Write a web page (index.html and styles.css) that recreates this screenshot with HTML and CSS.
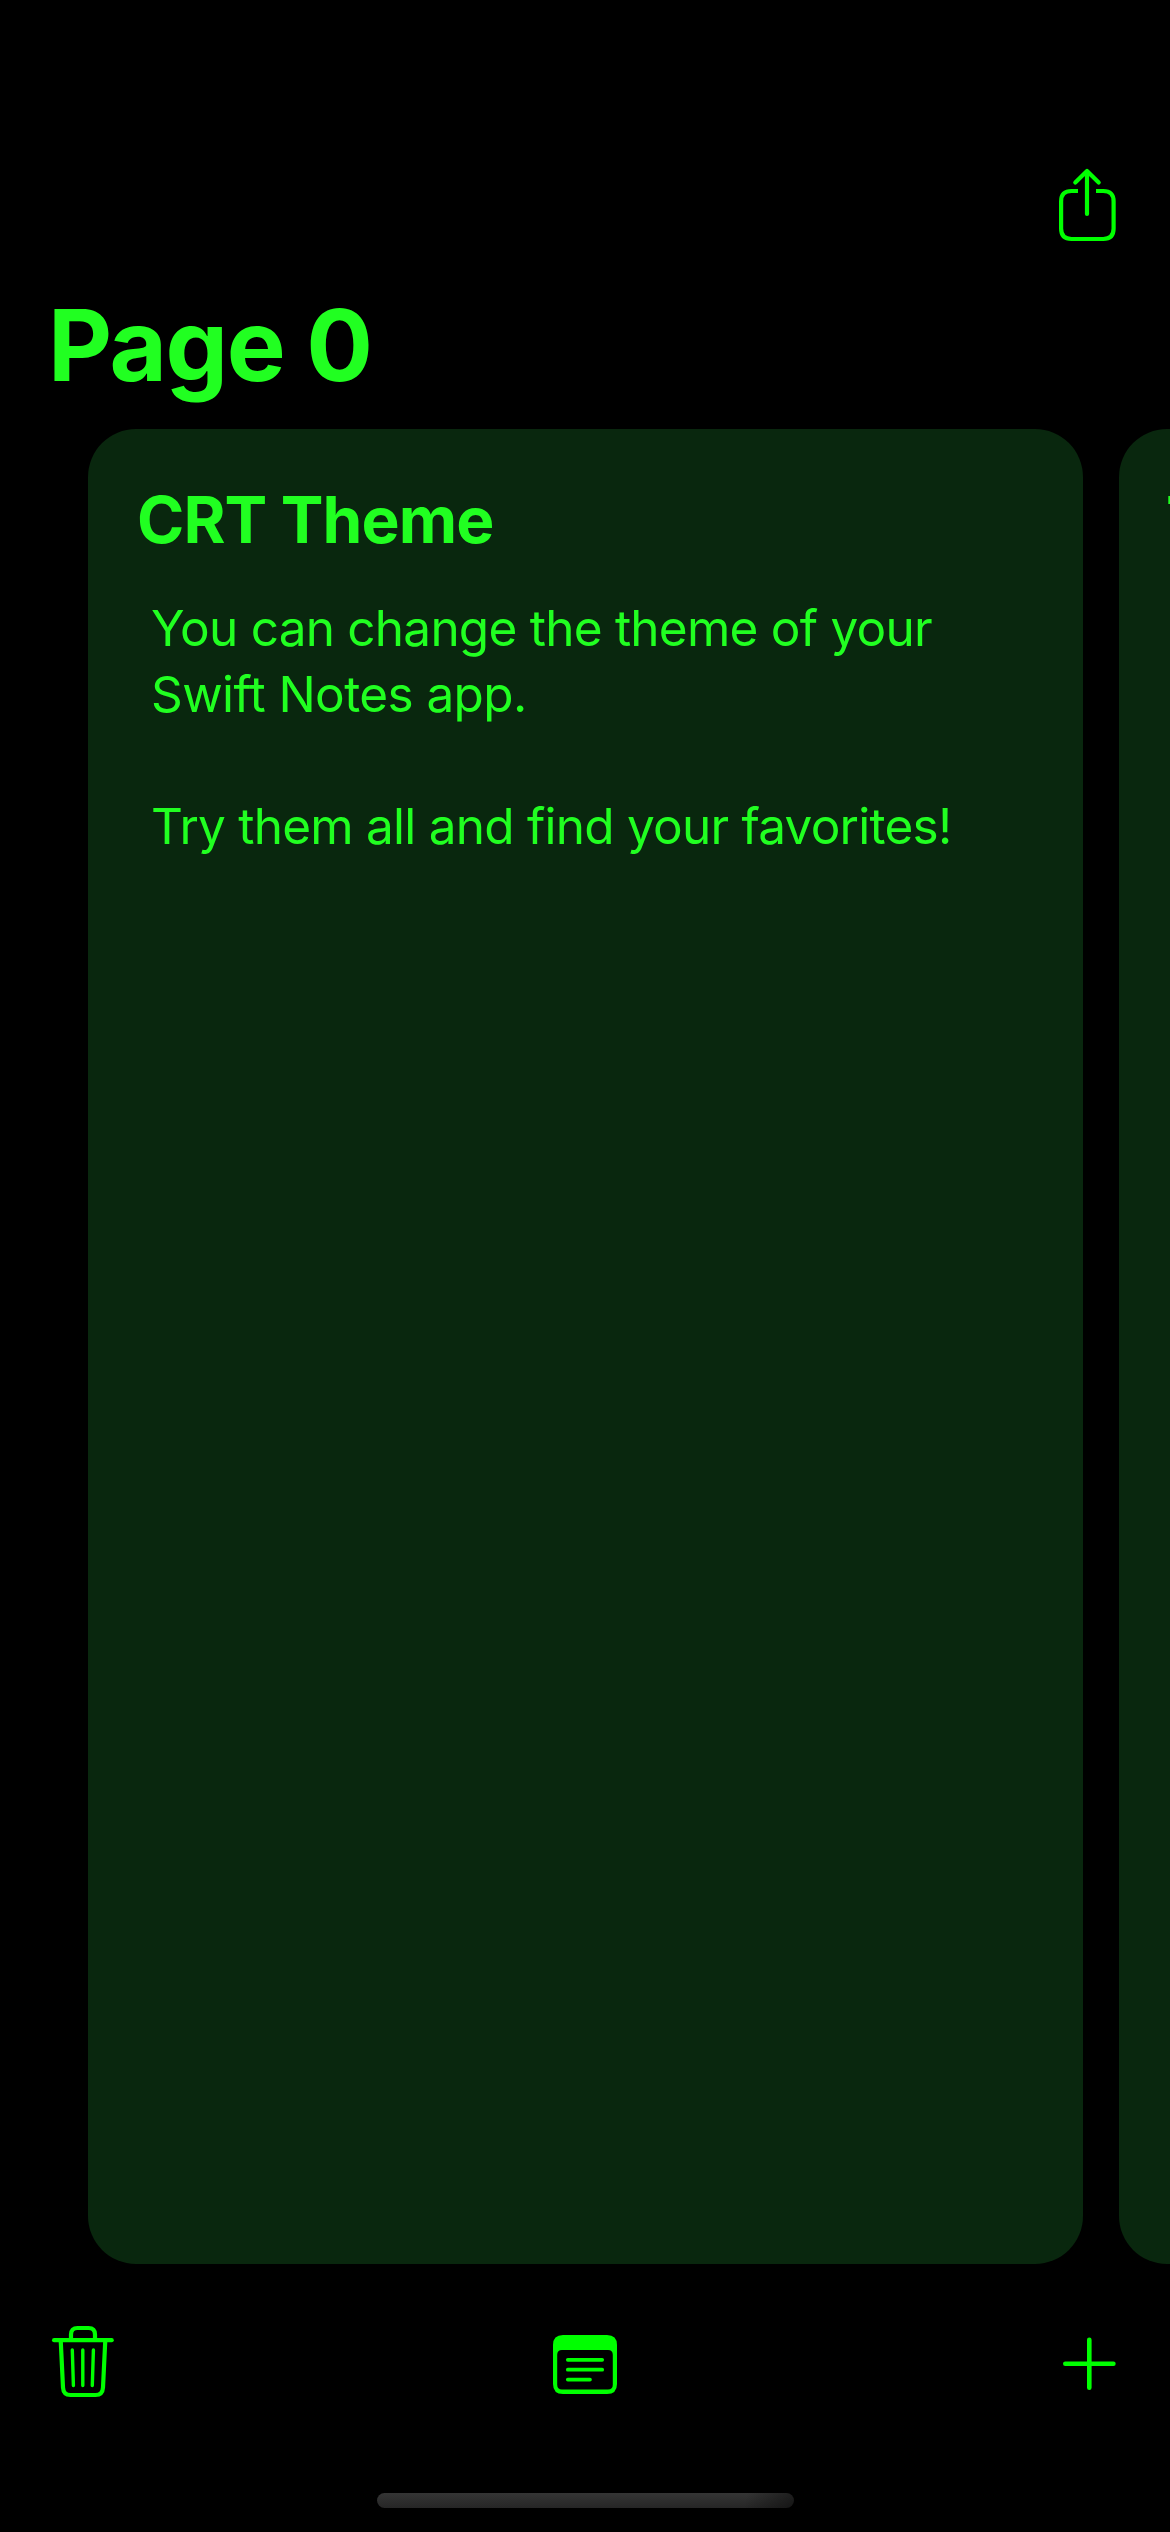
FILE: index.html
```
<!DOCTYPE html>
<html lang="en">
<head>
<meta charset="utf-8">
<title>Swift Notes</title>
<link rel="stylesheet" href="styles.css">
</head>
<body>
<main class="app">
  <header class="toolbar-top">
    <svg class="icon" width="58" height="75" viewBox="0 0 58 75" role="img" aria-label="Share">
      <path d="M19 23H12.500Q2.100 23 2.100 33.400V60.600Q2.100 71 12.500 71H44.200Q54.600 71 54.600 60.600V33.400Q54.600 23 44.200 23H37"/>
      <path class="round" d="M28 46V3.500M16.300 14.600L28 3L39.700 14.600"/>
    </svg>
  </header>
  <h1 class="page-title">Page 0</h1>
  <section class="cards">
    <article class="card">
      <h2 class="card-title">CRT Theme</h2>
      <p class="card-text">You can change the theme of your<br><span class="looser">Swift Notes app.</span><br><br>Try them all and find your favorites!</p>
    </article>
    <article class="card card-next">
      <h2 class="card-title">Themes</h2>
    </article>
  </section>
  <nav class="toolbar-bottom">
    <svg class="icon icon-trash" width="66" height="80" viewBox="0 0 66 80" role="img" aria-label="Delete">
      <path class="round" d="M4.100 20.200H61.700"/>
      <path d="M21 20V14.500Q21 8 27.500 8H38.500Q45 8 45 14.500V20M10.700 20L13 67.500Q13.400 75 20.500 75H45.500Q52.600 75 53 67.500L55.300 20"/>
      <path class="round thin" d="M22.300 30L23.400 65.500M32.800 30V65.500M43.400 30L42.300 65.500"/>
    </svg>
    <svg class="icon icon-note" width="70" height="70" viewBox="0 0 70 70" role="img" aria-label="Notes">
      <path class="solid" d="M13 5H57Q67 5 67 15V54Q67 64 57 64H13Q3 64 3 54V15Q3 5 13 5ZM12 20Q7.200 20 7.200 24.800V54.800Q7.200 59.600 12 59.600H58Q62.800 59.600 62.800 54.800V24.800Q62.800 20 58 20Z"/>
      <path class="round lines" d="M17.800 29.800H52.200M17.800 39.700H52.200M17.800 49.600H40"/>
    </svg>
    <svg class="icon icon-add" width="60" height="60" viewBox="0 0 60 60" role="img" aria-label="Add">
      <path class="round plus" d="M5.300 29.700H53.400M29.300 5.700V53.800"/>
    </svg>
  </nav>
  <div class="home-indicator"></div>
</main>
</body>
</html>
```
FILE: styles.css
```
* {
  box-sizing: border-box;
  margin: 0;
}

body {
  background: #000;
  color: #21ff21;
  font-family: Inter, sans-serif;
}

.app {
  display: flex;
  flex-direction: column;
  width: 1170px;
  height: 2532px;
  padding-top: 168px;
  overflow: hidden;
}

.toolbar-top {
  display: flex;
  justify-content: flex-end;
  height: 117px;
  padding-right: 53px;
}

.page-title {
  height: 144px;
  padding-left: 48px;
  font-size: 99px;
  line-height: 120px;
  letter-spacing: -1.4px;
}

.cards {
  display: flex;
  gap: 36px;
  padding-left: 88px;
}

.card {
  flex: 0 0 995px;
  height: 1835px;
  padding: 49px;
  border-radius: 48px;
  background: #09270e;
}

.card-next {
  padding-left: 47px;
}

.card-title {
  font-size: 64px;
  line-height: 84px;
  letter-spacing: -0.88px;
}

.card-text {
  padding: 33px 0 0 14px;
  font-size: 49.5px;
  line-height: 66px;
  letter-spacing: -0.76px;
  white-space: nowrap;
}

.looser {
  letter-spacing: -0.6px;
}

.toolbar-bottom {
  display: grid;
  grid-template-columns: 1fr 70px 1fr;
  align-items: center;
  height: 200px;
  padding: 0 50px;
}

.icon {
  display: block;
  fill: none;
  stroke: #0f0;
  stroke-width: 4.2px;
}

.icon-trash {
  margin-bottom: 8px;
}

.icon-note {
  margin-top: 2px;
}

.icon-add {
  justify-self: end;
}

.round {
  stroke-linecap: round;
  stroke-linejoin: round;
}

.thin {
  stroke-width: 3.4px;
}

.lines {
  stroke-width: 3.7px;
}

.plus {
  stroke-width: 4.6px;
}

.solid {
  fill: #0f0;
  fill-rule: evenodd;
  stroke: none;
}

.home-indicator {
  align-self: center;
  width: 417px;
  height: 15px;
  margin-top: 29px;
  border-radius: 8px;
  background:
    linear-gradient(100deg, transparent 88%, rgba(0, 0, 0, 0.45) 100%),
    linear-gradient(#353535, #262626);
}
```
